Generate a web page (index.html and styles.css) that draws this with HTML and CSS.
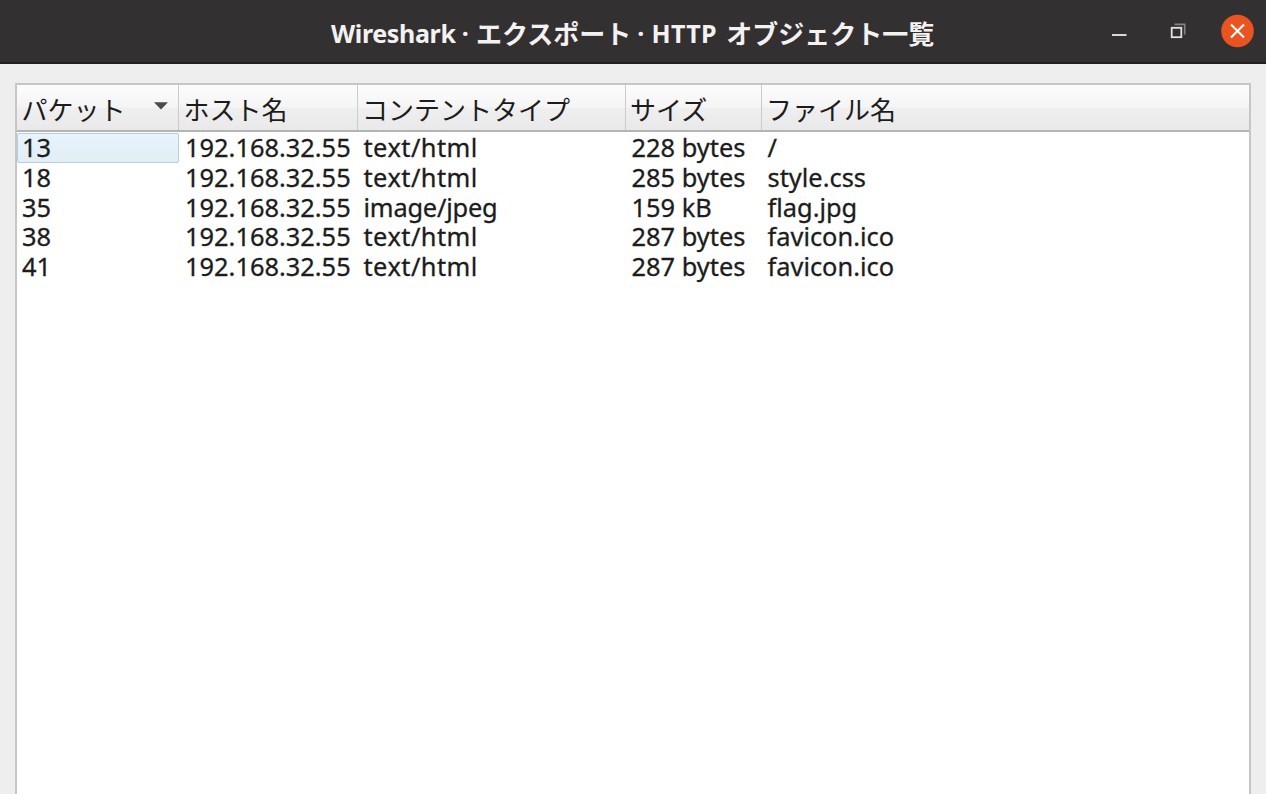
FILE: index.html
```html
<!DOCTYPE html>
<html lang="ja">
<head>
<meta charset="utf-8">
<title>Wireshark · エクスポート · HTTP オブジェクト一覧</title>
<link rel="stylesheet" href="styles.css">
</head>
<body>
<div class="window">
  <header class="titlebar">
    <h1 class="title"><span class="t-app">Wireshark ·</span><span class="t-ja">エクスポート</span><span class="t-http">· HTTP</span><span class="t-ja">オブジェクト一覧</span></h1>
    <div class="controls">
      <svg class="ctl" viewBox="0 0 34 34"><path d="M10 21h14.5" stroke="#d9d7d6" stroke-width="2"/></svg>
      <svg class="ctl" viewBox="0 0 34 34" fill="none"><path d="M13.5 10.4h10.2v10.2" stroke="#858383" stroke-width="1.6"/><rect x="10.7" y="13.8" width="9.6" height="9.4" stroke="#e4e2e1" stroke-width="1.8"/></svg>
      <svg class="ctl" viewBox="0 0 34 34"><circle cx="17.5" cy="17" r="16.3" fill="#e95420"/><path d="M11 10.5l13 13m0-13l-13 13" stroke="#fff" stroke-width="2.1"/></svg>
    </div>
  </header>
  <main class="content">
    <div class="table">
      <div class="row head">
        <div class="cell sorted">パケット<svg class="sort" viewBox="0 0 14 8"><path d="M0 .3h14L7 7.5z" fill="#4b4b4b"/></svg></div>
        <div class="cell">ホスト名</div>
        <div class="cell">コンテントタイプ</div>
        <div class="cell">サイズ</div>
        <div class="cell">ファイル名</div>
      </div>
      <div class="body">
        <div class="row"><div class="cell current">13</div><div class="cell">192.168.32.55</div><div class="cell type">text/html</div><div class="cell">228 bytes</div><div class="cell">/</div></div>
        <div class="row"><div class="cell">18</div><div class="cell">192.168.32.55</div><div class="cell type">text/html</div><div class="cell">285 bytes</div><div class="cell">style.css</div></div>
        <div class="row"><div class="cell">35</div><div class="cell">192.168.32.55</div><div class="cell image">image/jpeg</div><div class="cell">159 kB</div><div class="cell">flag.jpg</div></div>
        <div class="row"><div class="cell">38</div><div class="cell">192.168.32.55</div><div class="cell type">text/html</div><div class="cell">287 bytes</div><div class="cell">favicon.ico</div></div>
        <div class="row"><div class="cell">41</div><div class="cell">192.168.32.55</div><div class="cell type">text/html</div><div class="cell">287 bytes</div><div class="cell">favicon.ico</div></div>
      </div>
    </div>
  </main>
</div>
</body>
</html>
```
FILE: styles.css
```css
* { box-sizing: border-box; }
body { margin: 0; }
.window {
  height: 794px;
  display: flex;
  flex-direction: column;
  overflow: hidden;
  background: #eeeeee;
  color: #1c1c1c;
  font-family: "Noto Sans", "Noto Sans CJK JP", sans-serif;
}
.titlebar {
  height: 64px;
  flex: none;
  display: grid;
  grid-template-columns: 331px 1fr 169px;
  background: #333031;
  border-bottom: 2px solid #242122;
  color: #f4f2f1;
}
.title {
  grid-column: 2;
  margin: 0;
  display: flex;
  font-size: 25px;
  font-weight: 700;
  line-height: 66px;
  white-space: pre;
}
.t-app { width: 145px; letter-spacing: -0.35px; }
.t-ja { font-family: "Noto Sans CJK JP", sans-serif; font-size: 26px; line-height: 65px; }
.t-http { width: 95px; padding-left: 6px; letter-spacing: 0.35px; }
.controls { display: flex; gap: 25px; padding: 14px 0 0 5px; }
.ctl { width: 34px; height: 34px; }
.content { flex: 1; padding: 19px 15px 0; }
.table {
  height: 720px;
  background: #fff;
  border: 2px solid #c6c6c6;
}
.row {
  display: grid;
  grid-template-columns: 162px 178.5px 268px 136px 1fr;
}
.head {
  height: 47px;
  grid-template-rows: 45px;
  background: linear-gradient(#fcfcfc, #f5f5f5 48%, #efefef 52%, #e9e9e9);
  border-bottom: 2px solid #b4b4b4;
  font: 26px/47px "Noto Sans CJK JP", sans-serif;
}
.head .cell { padding-left: 4.5px; border-right: 1.5px solid #cbcbcb; }
.head .cell:last-child { border-right: 0; }
.sorted { display: flex; justify-content: space-between; }
.sort { width: 14px; height: 8px; margin: 17px 10px 0 0; }
.body {
  padding-top: 1px;
  font-size: 25.4px;
  line-height: 29.8px;
  -webkit-text-stroke: 0.3px currentColor;
}
.body .row { height: 29.8px; }
.body .cell { padding-left: 6px; white-space: nowrap; }
.body .cell:first-child { padding-left: 5px; }
.body .type { letter-spacing: 0.45px; }
.body .image { letter-spacing: -0.2px; }
.body .current {
  height: 29.8px;
  border: 1px solid #b7cfdd;
  border-radius: 2px;
  background: linear-gradient(#e7f4fd, #e2edf5);
  line-height: 27px;
}
.body .current:first-child { padding-left: 4px; }
```
